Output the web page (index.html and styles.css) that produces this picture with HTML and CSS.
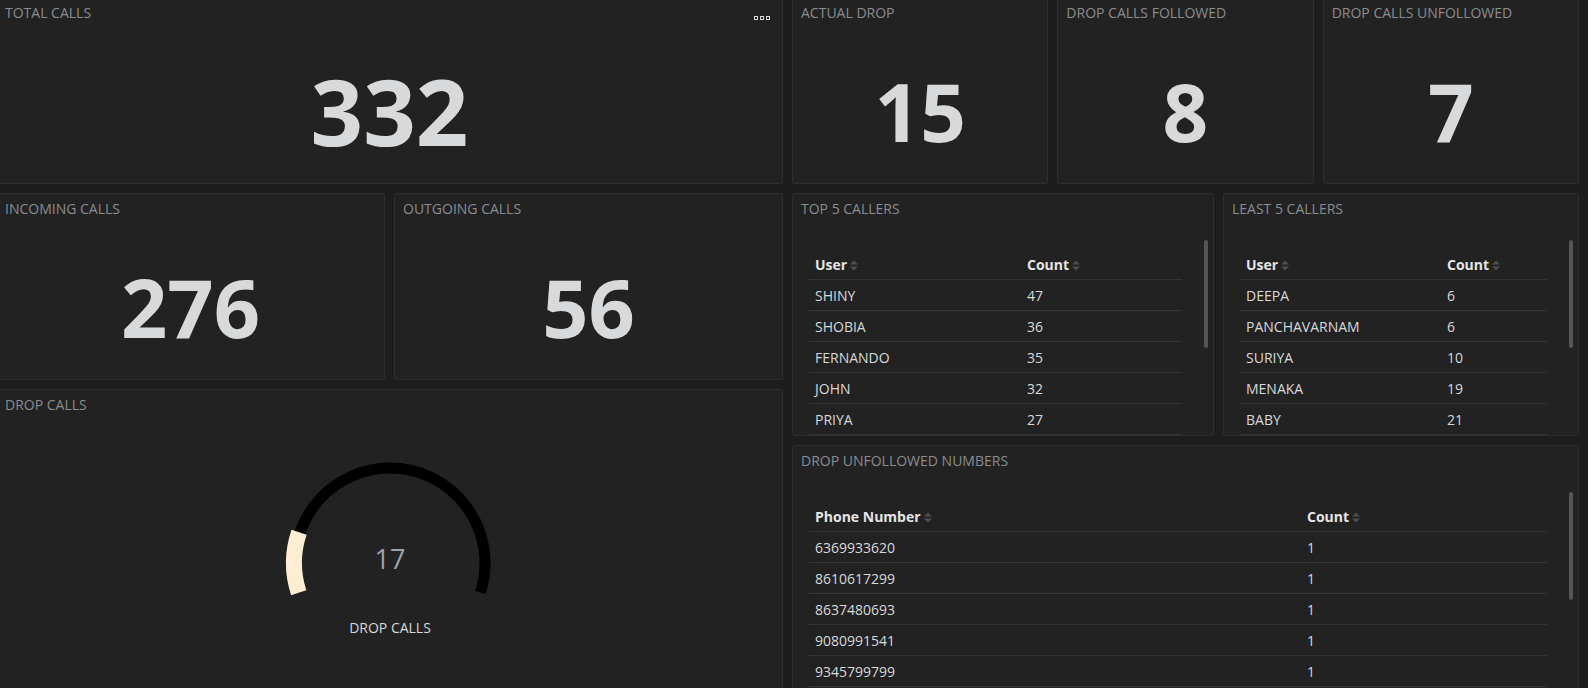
FILE: index.html
```html
<!DOCTYPE html>
<html lang="en">
<head>
<meta charset="utf-8">
<title>Calls Dashboard</title>
<link rel="stylesheet" href="styles.css">
</head>
<body>
<div class="dash">
  <div class="col">
    <section class="panel stat-panel">
      <div class="panel-title">TOTAL CALLS</div>
      <svg class="panel-menu" width="16" height="4" viewBox="0 0 16 4" aria-hidden="true">
        <rect x="0.5" y="0.5" width="3" height="3" fill="none" stroke="#d8d9da" stroke-width="1"/>
        <rect x="6.5" y="0.5" width="3" height="3" fill="none" stroke="#d8d9da" stroke-width="1"/>
        <rect x="12.5" y="0.5" width="3" height="3" fill="none" stroke="#d8d9da" stroke-width="1"/>
      </svg>
      <div class="stat-body"><span class="stat-value big">332</span></div>
    </section>
    <div class="row-two">
      <section class="panel stat-panel">
        <div class="panel-title">INCOMING CALLS</div>
        <div class="stat-body"><span class="stat-value mid">276</span></div>
      </section>
      <section class="panel stat-panel">
        <div class="panel-title">OUTGOING CALLS</div>
        <div class="stat-body"><span class="stat-value mid">56</span></div>
      </section>
    </div>
    <section class="panel gauge-panel">
      <div class="panel-title">DROP CALLS</div>
      <div class="gauge-body">
        <svg class="gauge" width="260" height="210" viewBox="0 0 260 210">
          <path d="M 39.65 159.36 A 95 95 0 1 1 220.35 159.36" fill="none" stroke="#000000" stroke-width="11"/>
          <path d="M 38.7 159.66 A 96 96 0 0 1 39.07 99.22" fill="none" stroke="#fdedd3" stroke-width="16"/>
          <text x="130" y="136.3" text-anchor="middle" class="gauge-value">17</text>
          <text x="130" y="200.3" text-anchor="middle" class="gauge-label">DROP CALLS</text>
        </svg>
      </div>
    </section>
  </div>
  <div class="col">
    <div class="row-three">
      <section class="panel stat-panel">
        <div class="panel-title">ACTUAL DROP</div>
        <div class="stat-body"><span class="stat-value small">15</span></div>
      </section>
      <section class="panel stat-panel">
        <div class="panel-title">DROP CALLS FOLLOWED</div>
        <div class="stat-body"><span class="stat-value small">8</span></div>
      </section>
      <section class="panel stat-panel">
        <div class="panel-title">DROP CALLS UNFOLLOWED</div>
        <div class="stat-body"><span class="stat-value small">7</span></div>
      </section>
    </div>
    <div class="row-tables">
      <section class="panel table-panel">
        <div class="panel-title">TOP 5 CALLERS</div>
        <div class="table-body">
          <table class="data">
            <thead><tr><th class="c-top">User<svg class="sort" width="8" height="11" viewBox="0 0 8 11"><polygon points="0,4.5 4,0.5 8,4.5"/><polygon points="0,6.5 4,10.5 8,6.5"/></svg></th><th>Count<svg class="sort" width="8" height="11" viewBox="0 0 8 11"><polygon points="0,4.5 4,0.5 8,4.5"/><polygon points="0,6.5 4,10.5 8,6.5"/></svg></th></tr></thead>
            <tbody>
              <tr><td>SHINY</td><td>47</td></tr>
              <tr><td>SHOBIA</td><td>36</td></tr>
              <tr><td>FERNANDO</td><td>35</td></tr>
              <tr><td>JOHN</td><td>32</td></tr>
              <tr><td>PRIYA</td><td>27</td></tr>
            </tbody>
          </table>
        </div>
        <div class="thumb"></div>
      </section>
      <section class="panel table-panel">
        <div class="panel-title">LEAST 5 CALLERS</div>
        <div class="table-body">
          <table class="data">
            <thead><tr><th class="c-least">User<svg class="sort" width="8" height="11" viewBox="0 0 8 11"><polygon points="0,4.5 4,0.5 8,4.5"/><polygon points="0,6.5 4,10.5 8,6.5"/></svg></th><th>Count<svg class="sort" width="8" height="11" viewBox="0 0 8 11"><polygon points="0,4.5 4,0.5 8,4.5"/><polygon points="0,6.5 4,10.5 8,6.5"/></svg></th></tr></thead>
            <tbody>
              <tr><td>DEEPA</td><td>6</td></tr>
              <tr><td>PANCHAVARNAM</td><td>6</td></tr>
              <tr><td>SURIYA</td><td>10</td></tr>
              <tr><td>MENAKA</td><td>19</td></tr>
              <tr><td>BABY</td><td>21</td></tr>
            </tbody>
          </table>
        </div>
        <div class="thumb"></div>
      </section>
    </div>
    <section class="panel table-panel wide">
      <div class="panel-title">DROP UNFOLLOWED NUMBERS</div>
      <div class="table-body">
        <table class="data">
          <thead><tr><th class="c-phone">Phone Number<svg class="sort" width="8" height="11" viewBox="0 0 8 11"><polygon points="0,4.5 4,0.5 8,4.5"/><polygon points="0,6.5 4,10.5 8,6.5"/></svg></th><th>Count<svg class="sort" width="8" height="11" viewBox="0 0 8 11"><polygon points="0,4.5 4,0.5 8,4.5"/><polygon points="0,6.5 4,10.5 8,6.5"/></svg></th></tr></thead>
          <tbody>
            <tr><td>6369933620</td><td>1</td></tr>
            <tr><td>8610617299</td><td>1</td></tr>
            <tr><td>8637480693</td><td>1</td></tr>
            <tr><td>9080991541</td><td>1</td></tr>
            <tr><td>9345799799</td><td>1</td></tr>
          </tbody>
        </table>
      </div>
      <div class="thumb"></div>
    </section>
  </div>
</div>
</body>
</html>
```

FILE: styles.css
```css
html, body {
  margin: 0;
  padding: 0;
  background: #1d1d1d;
  overflow: hidden;
  height: 688px;
}

body {
  font-family: "Open Sans", "Liberation Sans", sans-serif;
  color: #d8d9da;
}

.dash {
  display: flex;
  gap: 9px;
  margin: -3px 0 0 -4px;
  width: 1583px;
}

.col {
  width: 787px;
  flex: none;
  display: flex;
  flex-direction: column;
  gap: 9px;
}

.row-two {
  display: grid;
  grid-template-columns: 1fr 1fr;
  gap: 9px;
  height: 187px;
}

.row-three {
  display: grid;
  grid-template-columns: 1fr 1fr 1fr;
  gap: 9px;
  height: 187px;
}

.row-tables {
  display: grid;
  grid-template-columns: 422px 1fr;
  gap: 9px;
  height: 243px;
}

.panel {
  position: relative;
  box-sizing: border-box;
  background: #222222;
  border: 1px solid #2e2e2e;
  border-radius: 3px;
  overflow: hidden;
  display: flex;
  flex-direction: column;
}

.stat-panel {
  height: 187px;
}

.panel-title {
  height: 30px;
  line-height: 30px;
  padding-left: 8px;
  font-size: 14px;
  color: #8a8c8f;
  white-space: nowrap;
  flex: none;
}

.panel-menu {
  position: absolute;
  top: 18px;
  right: 12px;
}

.stat-body {
  flex: 1;
  display: flex;
  align-items: center;
  justify-content: center;
  padding-top: 10px;
}

.stat-value {
  font-weight: 700;
  line-height: 1;
  color: #d8d9da;
}

.stat-value.big { font-size: 92px; }
.stat-value.mid { font-size: 81px; }
.stat-value.small { font-size: 80px; }

.gauge-panel {
  height: 320px;
}

.gauge-body {
  display: flex;
  justify-content: center;
  padding-top: 13px;
}

.gauge-value {
  font-family: "Open Sans", "Liberation Sans", sans-serif;
  font-size: 27px;
  fill: #9da1a8;
}

.gauge-label {
  font-family: "Open Sans", "Liberation Sans", sans-serif;
  font-size: 14px;
  fill: #d8d9da;
}

.table-panel {
  height: 243px;
}

.table-panel.wide {
  height: 260px;
}

.table-body {
  padding: 25px 31px 0 16px;
  overflow: hidden;
}

.data {
  width: 100%;
  border-collapse: separate;
  border-spacing: 0;
  font-size: 14px;
}

.data th,
.data td {
  height: 30px;
  padding: 0 5px 0 6px;
  border-bottom: 1px solid #353535;
  text-align: left;
  vertical-align: middle;
  white-space: nowrap;
}

.data th {
  font-weight: 700;
  color: #e4e5e6;
}

.data td {
  color: #d8d9da;
}

.c-top { width: 201px; }
.c-least { width: 190px; }
.c-phone { width: 481px; }

.sort {
  margin-left: 3px;
  vertical-align: -1px;
  fill: #4e4e4e;
}

.thumb {
  position: absolute;
  top: 46px;
  right: 5px;
  width: 4px;
  height: 108px;
  background: #555555;
  border-radius: 2px;
}
```
